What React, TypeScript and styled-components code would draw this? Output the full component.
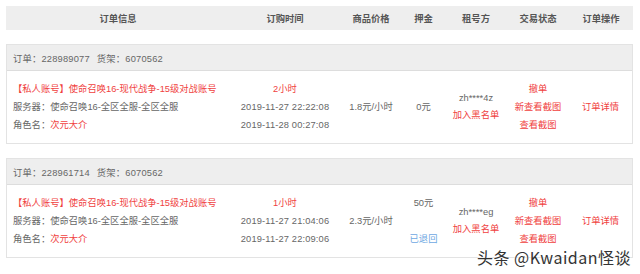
import React from "react";
import styled, { createGlobalStyle } from "styled-components";

const Global = createGlobalStyle`
  html, body { margin: 0; padding: 0; background: #fff; }
  body {
    font-family: "Liberation Sans", "Noto Sans CJK SC", sans-serif;
    font-size: 9.3px;
    color: #666;
  }
`;

const RED = "#f0413e";

const Page = styled.div`
  position: relative;
  width: 640px;
  height: 274px;
  padding: 6px 7px 0 6px;
  box-sizing: border-box;
  overflow: hidden;
`;

const cols = (first: number) => `${first}px 110px 62px 43px 62px 62px 1fr`;

const HeaderBar = styled.div`
  display: grid;
  grid-template-columns: ${cols(224)};
  height: 24px;
  align-items: center;
  background: #eeeeee;
  color: #555;
  font-weight: bold;
`;

const HeadCell = styled.div`
  text-align: center;
`;

const Card = styled.div`
  margin-top: 14px;
  border: 1px solid #e3e3e3;
`;

const CardHead = styled.div`
  height: 25px;
  display: flex;
  align-items: center;
  gap: 7px;
  padding-left: 6px;
  background: #eeeeee;
  border-bottom: 1px solid #dddddd;
  color: #666;
  letter-spacing: 0.2px;
`;

const CardBody = styled.div`
  display: grid;
  grid-template-columns: ${cols(223)};
  height: 72px;
  align-items: center;
`;

const Info = styled.div`
  padding-left: 6px;
  line-height: 18px;
  white-space: nowrap;
`;

const Col = styled.div<{ $lh?: number }>`
  display: flex;
  flex-direction: column;
  align-items: center;
  line-height: ${(p) => p.$lh ?? 18}px;
  white-space: nowrap;
`;

const DateText = styled.span`
  letter-spacing: 0.15px;
`;

const Red = styled.span`
  color: ${RED};
`;

const Blue = styled.span`
  color: #6ea8e2;
`;

const Spacer = styled.span`
  height: 18px;
`;

const Watermark = styled.div`
  position: absolute;
  left: 477px;
  top: 247px;
  font-family: "Noto Sans CJK SC", "Liberation Sans", sans-serif;
  font-size: 16px;
  line-height: 20px;
  color: #333;
  letter-spacing: 0.5px;
  text-shadow: 0 0 2px #fff, 0 0 2px #fff, 0 0 1px #fff;
`;

type Order = {
  id: string;
  shelf: string;
  duration: string;
  start: string;
  end: string;
  price: string;
  deposit: string;
  refunded?: boolean;
  renter: string;
};

const orders: Order[] = [
  {
    id: "228989077",
    shelf: "6070562",
    duration: "2小时",
    start: "2019-11-27 22:22:08",
    end: "2019-11-28 00:27:08",
    price: "1.8元/小时",
    deposit: "0元",
    renter: "zh****4z",
  },
  {
    id: "228961714",
    shelf: "6070562",
    duration: "1小时",
    start: "2019-11-27 21:04:06",
    end: "2019-11-27 22:09:06",
    price: "2.3元/小时",
    deposit: "50元",
    refunded: true,
    renter: "zh****eg",
  },
];

const OrderCard = ({ o }: { o: Order }) => (
  <Card>
    <CardHead>
      <span>订单：{o.id}</span>
      <span>货架：{o.shelf}</span>
    </CardHead>
    <CardBody>
      <Info>
        <div>
          <Red>【私人账号】使命召唤16-现代战争-15级对战账号</Red>
        </div>
        <div>服务器：使命召唤16-全区全服-全区全服</div>
        <div>
          角色名：<Red>次元大介</Red>
        </div>
      </Info>
      <Col>
        <Red>{o.duration}</Red>
        <DateText>{o.start}</DateText>
        <DateText>{o.end}</DateText>
      </Col>
      <Col>
        <span>{o.price}</span>
      </Col>
      {o.refunded ? (
        <Col>
          <span>{o.deposit}</span>
          <Spacer />
          <Blue>已退回</Blue>
        </Col>
      ) : (
        <Col>
          <span>{o.deposit}</span>
        </Col>
      )}
      <Col $lh={17}>
        <span>{o.renter}</span>
        <Red>加入黑名单</Red>
      </Col>
      <Col>
        <Red>撤单</Red>
        <Red>新查看截图</Red>
        <Red>查看截图</Red>
      </Col>
      <Col>
        <Red>订单详情</Red>
      </Col>
    </CardBody>
  </Card>
);

export default function App() {
  return (
    <>
      <Global />
      <Page>
        <HeaderBar>
          <HeadCell>订单信息</HeadCell>
          <HeadCell>订购时间</HeadCell>
          <HeadCell>商品价格</HeadCell>
          <HeadCell>押金</HeadCell>
          <HeadCell>租号方</HeadCell>
          <HeadCell>交易状态</HeadCell>
          <HeadCell>订单操作</HeadCell>
        </HeaderBar>
        {orders.map((o) => (
          <OrderCard key={o.id} o={o} />
        ))}
        <Watermark>头条 @Kwaidan怪谈</Watermark>
      </Page>
    </>
  );
}
